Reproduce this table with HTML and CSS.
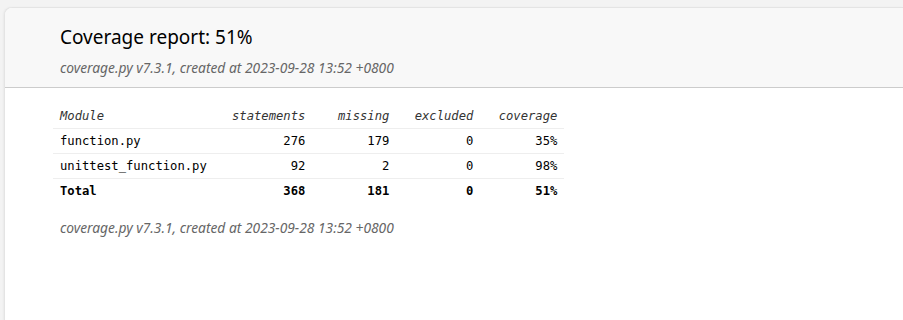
FILE: index.html
```html
<!DOCTYPE html>
<html lang="en">
<head>
<meta charset="utf-8">
<title>Coverage report</title>
<link rel="stylesheet" href="styles.css">
</head>
<body>
<div class="frame">
  <header class="head">
    <h1 class="title">Coverage report: <span class="pc">51%</span></h1>
    <p class="meta">coverage.py v7.3.1, created at 2023-09-28 13:52 +0800</p>
  </header>
  <main class="content">
    <table class="index">
      <thead>
        <tr><th class="name">Module</th><th>statements</th><th>missing</th><th>excluded</th><th>coverage</th></tr>
      </thead>
      <tbody>
        <tr><td class="name">function.py</td><td>276</td><td>179</td><td>0</td><td>35%</td></tr>
        <tr><td class="name">unittest_function.py</td><td>92</td><td>2</td><td>0</td><td>98%</td></tr>
      </tbody>
      <tfoot>
        <tr class="total"><td class="name">Total</td><td>368</td><td>181</td><td>0</td><td>51%</td></tr>
      </tfoot>
    </table>
    <p class="meta footer-meta">coverage.py v7.3.1, created at 2023-09-28 13:52 +0800</p>
  </main>
</div>
</body>
</html>
```
FILE: styles.css
```css
html, body {
  margin: 0;
  padding: 0;
  height: 100%;
}
body {
  background: #f3f3f3;
  padding: 7px 0 0 4px;
  box-sizing: border-box;
  overflow: hidden;
  font-family: "Noto Sans", "Open Sans", sans-serif;
}
.frame {
  background: #ffffff;
  border-top: 1px solid #e4e4e4;
  border-left: 1px solid #e4e4e4;
  border-top-left-radius: 8px;
  height: 100%;
  overflow: hidden;
  box-shadow: -1px 0 2px rgba(0,0,0,0.04);
}
.head {
  background: #f8f8f8;
  border-bottom: 1px solid #cccccc;
  padding: 17px 55px 10px;
}
.title {
  margin: 0;
  font-size: 19px;
  line-height: 24px;
  font-weight: 400;
  color: #000;
}
.meta {
  margin: 10px 0 0;
  font-size: 13.8px;
  line-height: 18px;
  font-style: italic;
  color: #666;
}
.content {
  padding: 16px 48px;
}
.index {
  border-collapse: collapse;
  table-layout: fixed;
  font-family: "DejaVu Sans Mono", "Liberation Mono", monospace;
  font-size: 12.2px;
  color: #000;
}
.index th, .index td {
  text-align: right;
  padding: 4px 7px;
  width: 70px;
  line-height: 16px;
  border-bottom: 1px solid #eeeeee;
  white-space: nowrap;
}
.index th {
  font-style: italic;
  font-weight: 400;
  color: #333;
}
.index th.name, .index td.name {
  text-align: left;
  width: 158px;
}
.index tr.total td {
  font-weight: 700;
  border-bottom: none;
}
.footer-meta {
  margin-top: 16px;
  padding-left: 7px;
}
```
